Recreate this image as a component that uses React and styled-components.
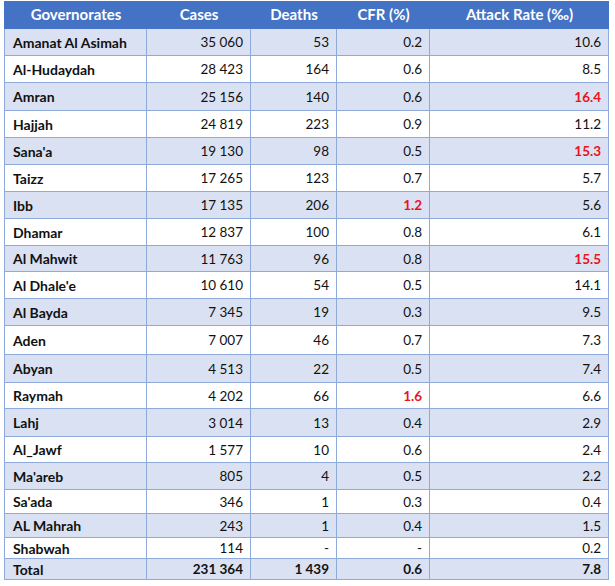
import React from "react";
import styled, { createGlobalStyle } from "styled-components";

const GlobalStyle = createGlobalStyle`
  html, body { margin: 0; padding: 0; background: #ffffff; }
  body { font-family: "Lato", "Liberation Sans", sans-serif; color: #111111; }
`;

const COLS = "142px 104px 86px 93px 179px";
const BORDER = "#8eaadb";

const Page = styled.div`
  padding: 1px 0 0 4px;
  width: 605px;
`;

const Table = styled.div`
  display: flex;
  flex-direction: column;
  width: 605px;
`;

const HeaderRow = styled.div`
  display: grid;
  grid-template-columns: 1px ${COLS};
  height: 28px;
  background: #4472c4;
`;

const HeaderCell = styled.div`
  grid-column: ${(p) => p.$col + 1};
  display: flex;
  align-items: center;
  justify-content: center;
  color: #ffffff;
  font-weight: 700;
  font-size: 15px;
  padding-bottom: 2px;
`;

const Row = styled.div`
  display: grid;
  grid-template-columns: ${COLS};
  height: ${(p) => p.$h}px;
  box-sizing: border-box;
  border-left: 1px solid ${BORDER};
  border-bottom: 1px solid ${BORDER};
  background: ${(p) => (p.$band ? "#d9e1f2" : "#ffffff")};
`;

const Cell = styled.div`
  display: flex;
  align-items: center;
  justify-content: ${(p) => (p.$left ? "flex-start" : "flex-end")};
  box-sizing: border-box;
  border-right: 1px solid ${BORDER};
  padding: 0 ${(p) => (p.$left ? "0" : "7px")} 0 ${(p) => (p.$left ? "8px" : "0")};
  font-size: ${(p) => (p.$left ? "14px" : "13.5px")};
  font-weight: ${(p) => (p.$bold ? 700 : 400)};
  color: ${(p) => (p.$red ? "#e8141c" : "#111111")};
  white-space: nowrap;
`;

const rows = [
  ["Amanat Al Asimah", "35 060", "53", "0.2", "10.6", 27],
  ["Al-Hudaydah", "28 423", "164", "0.6", "8.5", 27],
  ["Amran", "25 156", "140", "0.6", "16.4", 28, { ar: true }],
  ["Hajjah", "24 819", "223", "0.9", "11.2", 27],
  ["Sana'a", "19 130", "98", "0.5", "15.3", 27, { ar: true }],
  ["Taizz", "17 265", "123", "0.7", "5.7", 27],
  ["Ibb", "17 135", "206", "1.2", "5.6", 27, { cfr: true }],
  ["Dhamar", "12 837", "100", "0.8", "6.1", 27],
  ["Al Mahwit", "11 763", "96", "0.8", "15.5", 26, { ar: true }],
  ["Al Dhale'e", "10 610", "54", "0.5", "14.1", 27],
  ["Al Bayda", "7 345", "19", "0.3", "9.5", 27],
  ["Aden", "7 007", "46", "0.7", "7.3", 29],
  ["Abyan", "4 513", "22", "0.5", "7.4", 28],
  ["Raymah", "4 202", "66", "1.6", "6.6", 26, { cfr: true }],
  ["Lahj", "3 014", "13", "0.4", "2.9", 28],
  ["Al_Jawf", "1 577", "10", "0.6", "2.4", 26],
  ["Ma'areb", "805", "4", "0.5", "2.2", 27],
  ["Sa'ada", "346", "1", "0.3", "0.4", 24],
  ["AL Mahrah", "243", "1", "0.4", "1.5", 24],
  ["Shabwah", "114", "-", "-", "0.2", 21],
];

const headers = ["Governorates", "Cases", "Deaths", "CFR (%)", "Attack Rate (‰)"];

export default function App() {
  return (
    <>
      <GlobalStyle />
      <Page>
        <Table>
          <HeaderRow>
            {headers.map((h, i) => (
              <HeaderCell key={h} $col={i + 1}>
                {h}
              </HeaderCell>
            ))}
          </HeaderRow>
          {rows.map(([name, cases, deaths, cfr, ar, h, flags = {}], i) => (
            <Row key={name} $h={h} $band={i % 2 === 0}>
              <Cell $left $bold>
                {name}
              </Cell>
              <Cell>{cases}</Cell>
              <Cell>{deaths}</Cell>
              <Cell $red={flags.cfr} $bold={flags.cfr}>
                {cfr}
              </Cell>
              <Cell $red={flags.ar} $bold={flags.ar}>
                {ar}
              </Cell>
            </Row>
          ))}
          <Row $h={21} $band>
            <Cell $left $bold>
              Total
            </Cell>
            <Cell $bold>231 364</Cell>
            <Cell $bold>1 439</Cell>
            <Cell $bold>0.6</Cell>
            <Cell $bold>7.8</Cell>
          </Row>
        </Table>
      </Page>
    </>
  );
}
